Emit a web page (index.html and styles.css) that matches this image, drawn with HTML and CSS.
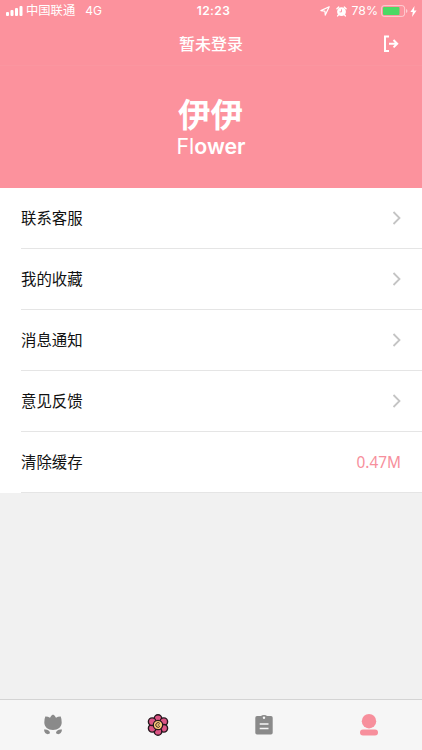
FILE: index.html
```html
<!DOCTYPE html>
<html lang="zh-CN">
<head>
  <meta charset="UTF-8">
  <meta name="viewport" content="width=device-width, initial-scale=1.0">
  <title>伊伊 Flower</title>
  <link rel="stylesheet" href="styles.css">
</head>
<body>

  <!-- Header -->
  <header class="header">
    <div class="status-bar">
      <div class="status-left">
        <svg class="signal" width="17" height="10" viewBox="0 0 17 10" fill="#fff">
          <rect x="0" y="6" width="3" height="4" rx="1"/>
          <rect x="4.500" y="4" width="3" height="6" rx="1"/>
          <rect x="9" y="2" width="3" height="8" rx="1"/>
          <rect x="13.500" y="0" width="3" height="10" rx="1"/>
        </svg>
        <span class="carrier">中国联通</span>
        <span class="network">4G</span>
      </div>
      <span class="time">12:23</span>
      <div class="status-right">
        <svg width="10" height="10" viewBox="0 0 10 10" fill="none" stroke="#fff" stroke-width="1.2" stroke-linejoin="round">
          <path d="M9.200 .8L.9 4.600l4 .5.400 4z"/>
        </svg>
        <svg class="alarm" width="11" height="11" viewBox="0 0 12 12">
          <path d="M1 3L3 1.200M11 3L9 1.200M2.800 9.500L1.800 10.800M9.200 9.500l1 1.300" stroke="#fff" stroke-width="1.500" stroke-linecap="round"/>
          <circle cx="6" cy="6.200" r="4.800" fill="#fff"/>
          <path d="M6 3.600v2.800H3.900" fill="none" stroke="#fc929d" stroke-width="1"/>
        </svg>
        <span class="percent">78%</span>
        <svg class="battery" width="27" height="12" viewBox="0 0 27 12">
          <rect x=".6" y=".6" width="23" height="10.800" rx="2.500" fill="none" stroke="#fff" stroke-opacity=".55"/>
          <rect x="2" y="2" width="16.500" height="8" rx="1" fill="#4cd964"/>
          <path d="M25 4v4q1.500-.6 1.500-2T25 4z" fill="#fff" fill-opacity=".55"/>
        </svg>
        <svg class="bolt" width="7" height="11" viewBox="0 0 7 11" fill="#fff">
          <path d="M4.500 0L.4 6h2.400L2 11l4.600-6.400H4z"/>
        </svg>
      </div>
    </div>
    <div class="nav-bar">
      <h1>暂未登录</h1>
      <button class="logout-button">
        <svg width="16" height="18" viewBox="0 0 16 18" fill="none" stroke="#fff" stroke-width="2">
          <path d="M6 1.500H2v14.500H6"/>
          <path d="M6 8.700H14M10.500 5l3.700 3.700-3.700 3.700"/>
        </svg>
      </button>
    </div>
  </header>

  <!-- Logo -->
  <section class="banner">
    <div class="logo-cn">伊伊</div>
    <div class="logo-en">Fl<b>ower</b></div>
  </section>

  <!-- Menu -->
  <main class="menu">
    <a class="menu-item">
      <span class="label">联系客服</span>
      <svg class="arrow" width="10" height="14" viewBox="0 0 10 14"><path d="M1.500 1l6 6-6 6"/></svg>
    </a>
    <a class="menu-item">
      <span class="label">我的收藏</span>
      <svg class="arrow" width="10" height="14" viewBox="0 0 10 14"><path d="M1.500 1l6 6-6 6"/></svg>
    </a>
    <a class="menu-item">
      <span class="label">消息通知</span>
      <svg class="arrow" width="10" height="14" viewBox="0 0 10 14"><path d="M1.500 1l6 6-6 6"/></svg>
    </a>
    <a class="menu-item">
      <span class="label">意见反馈</span>
      <svg class="arrow" width="10" height="14" viewBox="0 0 10 14"><path d="M1.500 1l6 6-6 6"/></svg>
    </a>
    <a class="menu-item">
      <span class="label">清除缓存</span>
      <span class="cache-size">0.47M</span>
    </a>
  </main>

  <!-- Tab Bar -->
  <footer class="tab-bar">
    <a class="tab">
      <svg width="20" height="22" viewBox="0 0 20 22" fill="#8a8a8a">
        <path d="M10 .5Q8 1.500 7 3.700 5 2.500 2.300 2.600 1.300 5 1.300 8.500C1.300 13 5 16 10 16s8.700-3 8.700-7.500q0-3.500-1-5.900Q15 2.500 13 3.700 12 1.500 10 .5z"/>
        <path d="M1 15.600c3-.6 5.800.8 6 3.400-1.200 1.900-5.800 1.800-6-3.400zM19 15.600c-3-.6-5.800.8-6 3.400 1.200 1.900 5.800 1.800 6-3.400z"/>
      </svg>
    </a>
    <a class="tab">
      <svg width="22" height="22" viewBox="0 0 22 22">
        <g fill="#dc5585" stroke="#24151c" stroke-width="1.400">
          <circle cx="11" cy="4.600" r="3.800"/>
          <circle cx="16.800" cy="7.700" r="3.800"/>
          <circle cx="16.800" cy="14.300" r="3.800"/>
          <circle cx="11" cy="17.400" r="3.800"/>
          <circle cx="5.200" cy="14.300" r="3.800"/>
          <circle cx="5.200" cy="7.700" r="3.800"/>
        </g>
        <circle cx="11" cy="11" r="4.700" fill="#f7c878" stroke="#24151c" stroke-width="1.200"/>
        <path d="M12.800 9.400a2.300 2.300 0 1 0 .1 3M10.800 11h1.500" fill="none" stroke="#24151c" stroke-width=".9"/>
      </svg>
    </a>
    <a class="tab">
      <svg width="18" height="20" viewBox="0 0 18 20">
        <path d="M2 1h4Q7 0 9 0t3 1h4q1.700 0 1.700 1.700v15.100q0 1.700-1.700 1.700H2Q.3 19.500.3 17.800V2.700Q.3 1 2 1z" fill="#8a8a8a"/>
        <circle cx="9" cy="2.800" r="1.200" fill="#f6f6f6"/>
        <path d="M4.700 9h8.800M4.700 13.500h8.800" stroke="#f6f6f6" stroke-width="1.700"/>
      </svg>
    </a>
    <a class="tab">
      <svg width="18" height="22" viewBox="0 0 18 22" fill="#f78f9c">
        <circle cx="9" cy="7.200" r="7.200"/>
        <rect x="0" y="15.500" width="18" height="6" rx="3"/>
      </svg>
    </a>
  </footer>

</body>
</html>
```
FILE: styles.css
```css
/* Global Styles */
* {
  margin: 0;
  padding: 0;
  box-sizing: border-box;
}

body {
  display: flex;
  flex-direction: column;
  height: 100vh;
  background-color: #f1f1f1;
  color: #111;
  font-family: 'Inter', 'Noto Sans CJK SC', sans-serif;
  overflow: hidden;
}

svg {
  display: block;
  flex: none;
}

/* Header */
.header {
  height: 66px;
  background-color: #fc929d;
  color: #fff;
  border-bottom: 1px solid #fb96a0;
}

.status-bar {
  display: grid;
  grid-template-columns: 1fr auto 1fr;
  align-items: center;
  height: 22px;
  padding: 0 5px 0 6px;
  font-size: 12.3px;
  line-height: 20px;
}

.status-left,
.status-right {
  display: flex;
  align-items: center;
}

.status-right {
  justify-content: flex-end;
}

.carrier {
  margin-left: 3px;
}

.network {
  margin-left: 10px;
  font-size: 12px;
}

.time {
  padding-left: 4px;
  padding-bottom: 1px;
  font-size: 12px;
  font-weight: 600;
  letter-spacing: 0.4px;
}

.alarm {
  margin: 0 5px 0 6px;
}

.percent {
  font-size: 12.3px;
}

.battery {
  margin: 0 2px 0 3px;
}

.nav-bar {
  display: grid;
  grid-template-columns: 1fr auto 1fr;
  align-items: center;
  height: 43px;
  padding: 0 23px;
}

.nav-bar h1 {
  grid-column: 2;
  font-size: 16px;
  font-weight: 500;
  line-height: 24px;
}

.logout-button {
  justify-self: end;
  border: none;
  background: none;
  cursor: pointer;
}

/* Logo */
.banner {
  height: 121.5px;
  padding-top: 30px;
  background-color: #fc929d;
  color: #fff;
}

.logo-cn {
  margin-left: 178px;
  font-size: 32.5px;
  font-weight: 700;
  line-height: 40px;
}

.logo-en {
  margin-left: 176.5px;
  font-size: 21.3px;
  line-height: 20px;
}

.logo-en b {
  font-weight: 600;
}

/* Menu */
.menu {
  background-color: #fff;
}

.menu-item {
  display: flex;
  justify-content: space-between;
  align-items: center;
  height: 61.1px;
  margin-left: 21px;
  padding-right: 20px;
  border-bottom: 1px solid #e5e5e5;
  font-size: 15.4px;
}

.label {
  padding-bottom: 1px;
}

.arrow {
  fill: none;
  stroke: #c4c4c4;
  stroke-width: 1.8;
}

.cache-size {
  padding-top: 2px;
  padding-right: 1px;
  color: #f78f9c;
  font-family: 'Noto Sans', sans-serif;
}

/* Tab Bar */
.tab-bar {
  display: flex;
  height: 51px;
  margin-top: auto;
  border-top: 1px solid #d4d4d4;
  background-color: #f6f6f6;
}

.tab {
  display: flex;
  flex: 1;
  justify-content: center;
  align-items: center;
}
```
